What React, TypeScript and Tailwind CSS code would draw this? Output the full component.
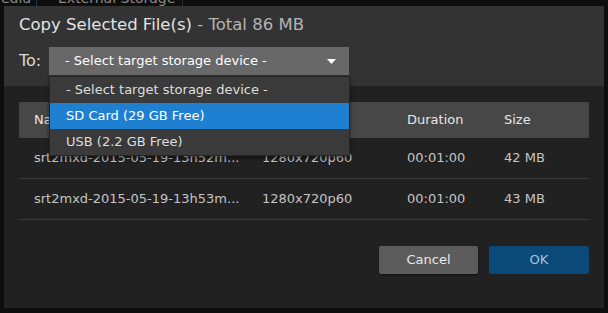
import React from "react";

const files = [
  { name: "srt2mxd-2015-05-19-13h52m...", res: "1280x720p60", dur: "00:01:00", size: "42 MB" },
  { name: "srt2mxd-2015-05-19-13h53m...", res: "1280x720p60", dur: "00:01:00", size: "43 MB" },
];

const font = { fontFamily: '"DejaVu Sans", "Open Sans", sans-serif' };

export default function App() {
  return (
    <div className="relative h-[313px] w-[608px] overflow-hidden bg-[#0e0e0e]" style={font}>
      {/* page behind the modal */}
      <div className="flex h-[6px] overflow-hidden text-[14px] leading-none text-[#8a8a8a]">
        <div className="-mt-[9px] w-[37px] border-r border-[#1d3a55] pl-[1px]">edia</div>
        <div className="-mt-[9px] w-[146px] border-r border-[#2a2a2a] pl-[21px] whitespace-nowrap">External Storage</div>
      </div>

      <div className="ml-[4px] flex h-[302px] w-[600px] flex-col bg-[#212121]">
        <div className="flex h-[80px] flex-col bg-[#333333] px-[15px]">
          <div className="mt-[10px] whitespace-nowrap text-[16.5px] leading-[18px] text-[#e2e2e2]">
            Copy Selected File(s)
            <span className="text-[#b4b4b4]"> - Total 86 MB</span>
          </div>
          <div className="mt-[13px] flex items-center">
            <span className="w-[30px] text-[16px] text-[#dcdcdc]">To:</span>
            <div className="flex h-[28px] w-[300px] items-center justify-between bg-[#686868] pl-[16px] pr-[13px] text-[13px] text-white">
              <span>- Select target storage device -</span>
              <svg width="9" height="5" viewBox="0 0 9 5">
                <path d="M0 0h9L4.5 5z" fill="#fff" />
              </svg>
            </div>
          </div>
        </div>

        <div className="flex flex-1 flex-col px-[15px] pt-[16px]">
          <div className="grid h-[36px] grid-cols-[228px_145px_97px_1fr] items-center bg-[#474747] px-[15px] text-[13px] text-[#e6e6e6]">
            <span>Name</span>
            <span>Resolution</span>
            <span>Duration</span>
            <span>Size</span>
          </div>
          {files.map((f) => (
            <div
              key={f.name}
              className="grid h-[41px] grid-cols-[228px_145px_97px_1fr] items-center border-b border-[#3a3a3a] px-[15px] text-[13px] text-[#c4c4c4]"
            >
              <span>{f.name}</span>
              <span>{f.res}</span>
              <span>{f.dur}</span>
              <span>{f.size}</span>
            </div>
          ))}

          <div className="mt-[26px] flex justify-end gap-[11px]">
            <button className="h-[28px] w-[99px] rounded-[2px] bg-[#5c5c5c] text-[13px] text-[#e8e8e8] shadow-[0_1px_2px_rgba(0,0,0,0.5)]">
              Cancel
            </button>
            <button className="h-[28px] w-[100px] rounded-[2px] bg-[#0b4a78] text-[13px] text-[#a8c2d8]">
              OK
            </button>
          </div>
        </div>
      </div>

      {/* open dropdown list */}
      <div className="absolute left-[49px] top-[76px] w-[301px] border border-[#262626] bg-[#3a3a3a] text-[13px] text-[#dedede] shadow-[0_2px_4px_rgba(0,0,0,0.5)]">
        <div className="flex h-[26px] items-center pl-[16px]">- Select target storage device -</div>
        <div className="flex h-[26px] items-center bg-[#1f7fd0] pl-[16px] text-white">SD Card (29 GB Free)</div>
        <div className="flex h-[26px] items-center pl-[16px]">USB (2.2 GB Free)</div>
      </div>
    </div>
  );
}
